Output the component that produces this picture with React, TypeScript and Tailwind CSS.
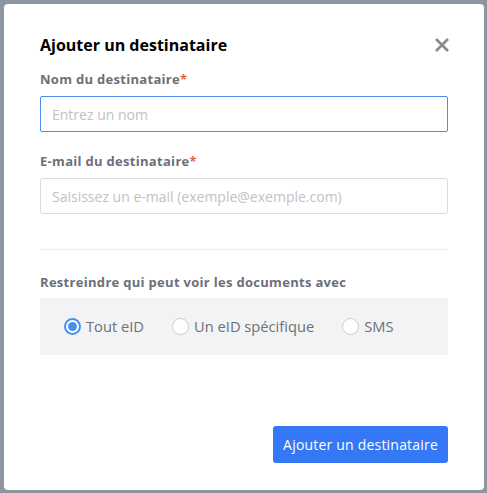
import { useState } from 'react'

const font = { fontFamily: '"Open Sans", "Noto Sans", sans-serif' }

function Label({ children }: { children: string }) {
  return (
    <div className="text-[13px] font-bold leading-[18px] tracking-[0.3px] text-[#6b7079]">
      {children}
      <span className="text-[#e8623a]">*</span>
    </div>
  )
}

function Radio({ label, checked, onClick }: { label: string; checked: boolean; onClick: () => void }) {
  return (
    <button onClick={onClick} className="flex items-center gap-[5px]">
      <span
        className={`flex h-[17px] w-[17px] items-center justify-center rounded-full bg-white ${checked ? 'border-[2px] border-[#4a8ff0]' : 'border border-[#c9cbcf]'}`}
      >
        {checked && <span className="h-[9px] w-[9px] rounded-full bg-[#4a8ff0]" />}
      </span>
      <span className="text-[14.7px] text-[#6e7176]">{label}</span>
    </button>
  )
}

export default function App() {
  const [mode, setMode] = useState('all')

  return (
    <div className="h-[493px] w-full bg-[#8d95a0] p-[4px] pr-[3px]" style={font}>
      <div className="flex h-[486px] w-[480px] flex-col rounded-[4px] bg-white px-[36px] pb-[27px] pt-[29px]">
        <div className="flex items-center justify-between">
          <h2 className="text-[16px] font-bold leading-[24px] text-black">Ajouter un destinataire</h2>
          <svg width="16" height="16" viewBox="0 0 16 16" className="mr-[-2px]">
            <path d="M2 2 L14 14 M14 2 L2 14" stroke="#8a8a8a" strokeWidth="2.6" />
          </svg>
        </div>

        <div className="mt-[13px]">
          <Label>Nom du destinataire</Label>
          <input
            placeholder="Entrez un nom"
            className="mt-[8px] h-[36px] w-full rounded-[2px] border border-[#4a8ff0] px-[11px] text-[14px] text-[#333] outline-none placeholder:text-[#c2c2c2]"
          />
        </div>

        <div className="mt-[20px]">
          <Label>E-mail du destinataire</Label>
          <input
            placeholder="Saisissez un e-mail (exemple@exemple.com)"
            className="mt-[8px] h-[36px] w-full rounded-[2px] border border-[#dcdcdc] px-[11px] text-[14px] text-[#333] outline-none placeholder:text-[#c2c2c2]"
          />
        </div>

        <div className="mt-[35px] border-t border-[#eeeeee]" />

        <div className="mt-[23px] text-[13px] font-bold leading-[18px] tracking-[0.3px] text-[#6b7079]">
          Restreindre qui peut voir les documents avec
        </div>
        <div className="mt-[7px] flex h-[57px] items-center gap-[28px] bg-[#f2f3f5] px-[24px]">
          <Radio label="Tout eID" checked={mode === 'all'} onClick={() => setMode('all')} />
          <Radio label="Un eID spécifique" checked={mode === 'one'} onClick={() => setMode('one')} />
          <Radio label="SMS" checked={mode === 'sms'} onClick={() => setMode('sms')} />
        </div>

        <div className="mt-auto flex justify-end">
          <button className="h-[37px] rounded-[3px] bg-[#3478f6] px-[10px] text-[14px] tracking-[0.2px] text-white">
            Ajouter un destinataire
          </button>
        </div>
      </div>
    </div>
  )
}
